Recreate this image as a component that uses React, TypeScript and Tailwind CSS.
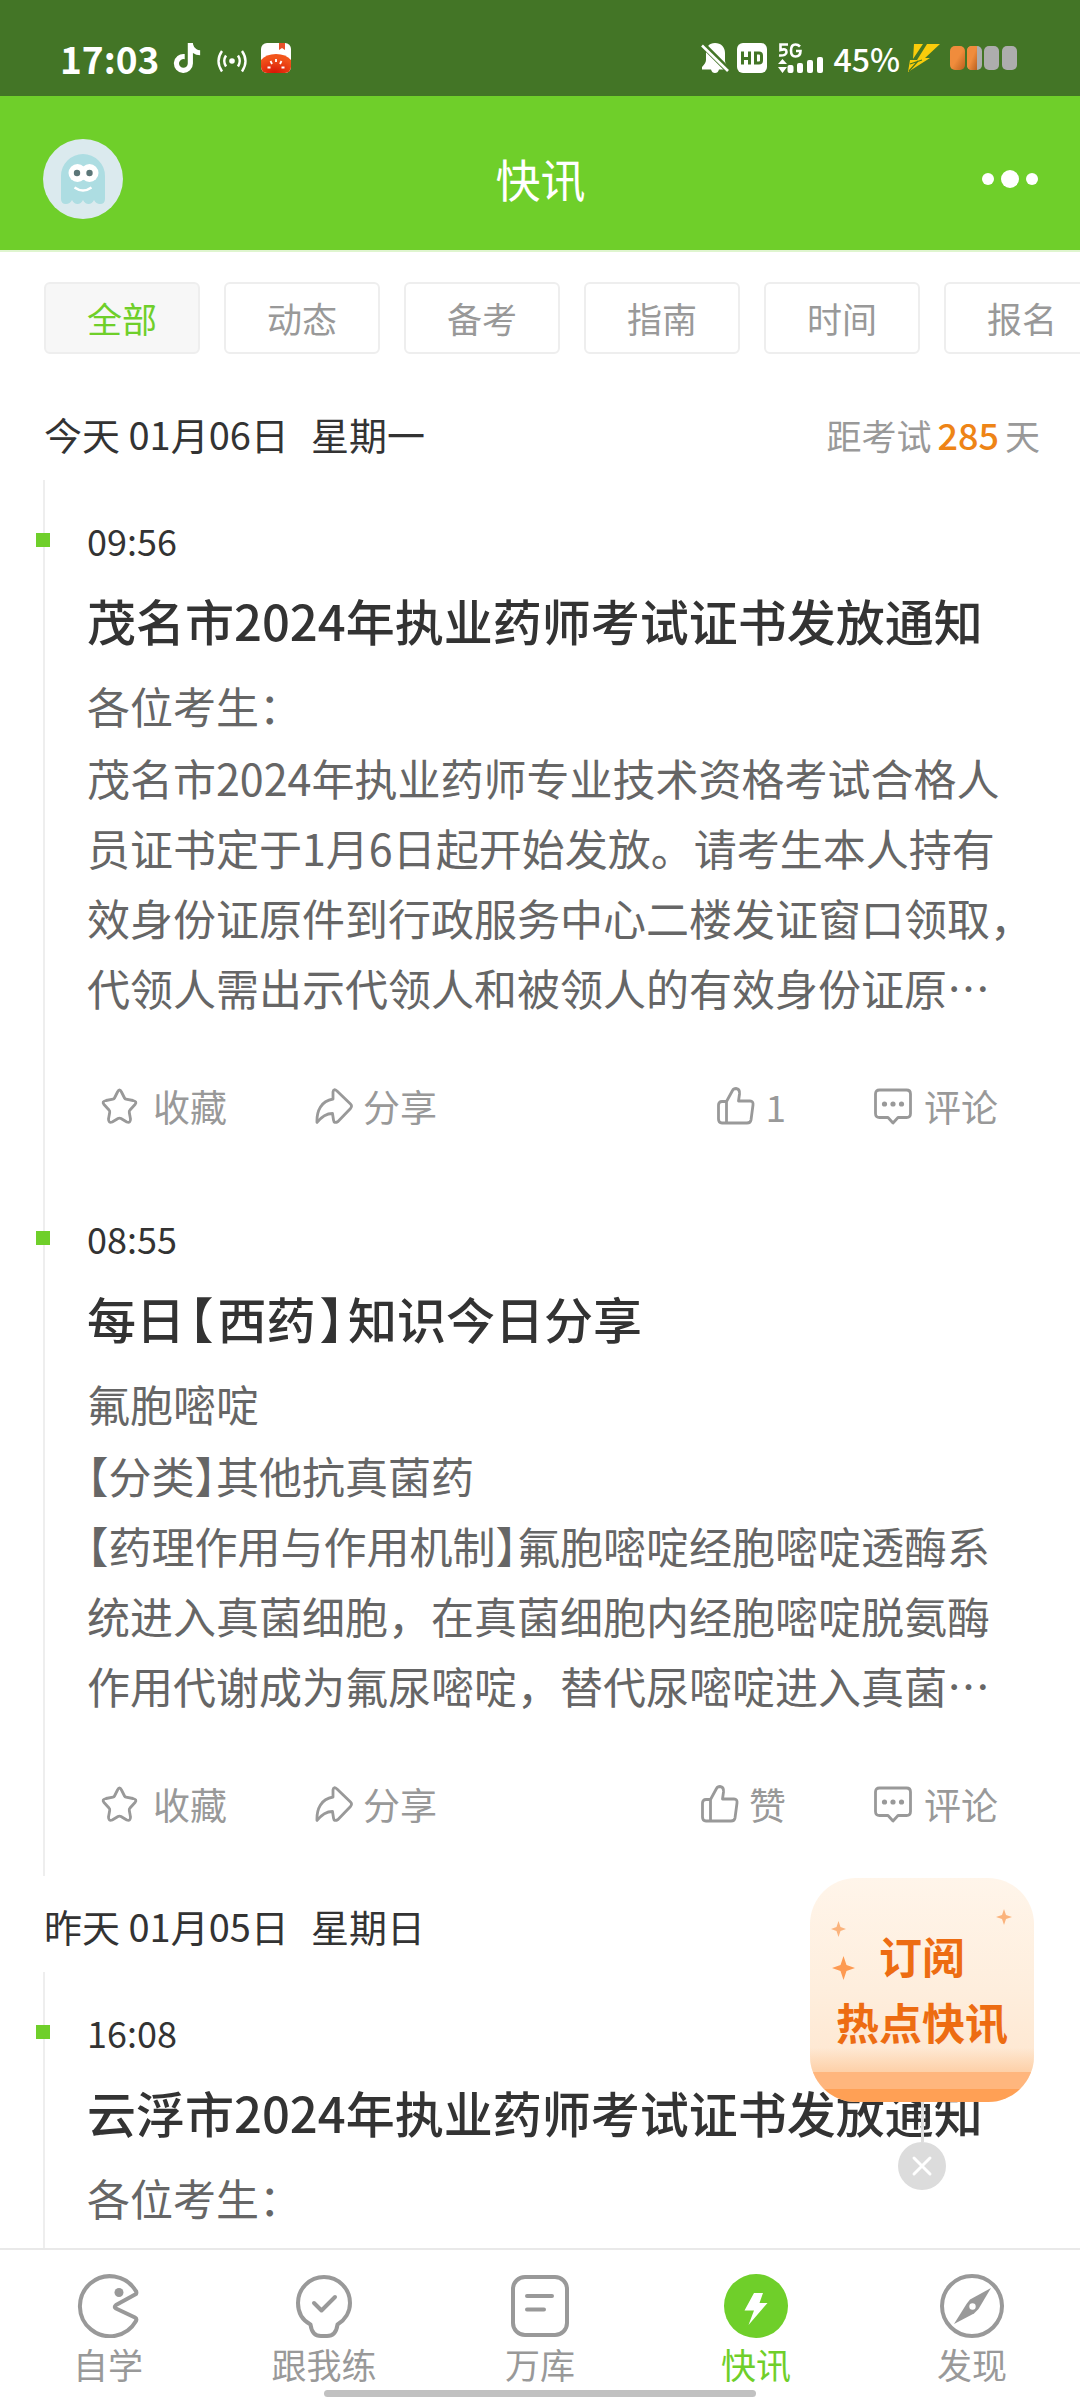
import { useState } from 'react';
import type { ReactNode } from 'react';
import { FaTiktok } from 'react-icons/fa6';

interface Article {
  time: string;
  title: string;
  lead: string;
  lines?: string[];
  likes: number;
}

interface Day {
  date: string;
  weekday: string;
  articles: Article[];
}

const CATEGORIES = ['全部', '动态', '备考', '指南', '时间', '报名'];

const DAYS: Day[] = [
  {
    date: '今天 01月06日',
    weekday: '星期一',
    articles: [
      {
        time: '09:56',
        title: '茂名市2024年执业药师考试证书发放通知',
        lead: '各位考生：',
        lines: [
          '茂名市2024年执业药师专业技术资格考试合格人',
          '员证书定于1月6日起开始发放。请考生本人持有',
          '效身份证原件到行政服务中心二楼发证窗口领取，',
          '代领人需出示代领人和被领人的有效身份证原⋯',
        ],
        likes: 1,
      },
      {
        time: '08:55',
        title: '每日【西药】知识今日分享',
        lead: '氟胞嘧啶',
        lines: [
          '【分类】其他抗真菌药',
          '【药理作用与作用机制】氟胞嘧啶经胞嘧啶透酶系',
          '统进入真菌细胞，在真菌细胞内经胞嘧啶脱氨酶',
          '作用代谢成为氟尿嘧啶，替代尿嘧啶进入真菌⋯',
        ],
        likes: 0,
      },
    ],
  },
  {
    date: '昨天 01月05日',
    weekday: '星期日',
    articles: [
      {
        time: '16:08',
        title: '云浮市2024年执业药师考试证书发放通知',
        lead: '各位考生：',
        likes: 0,
      },
    ],
  },
];

// 【】 are set half-width so they don't leave a hole in the line
function Brackets({ text, className = '' }: { text: string; className?: string }) {
  return (
    <>
      {text.split(/([【】])/).map((part, i) =>
        part === '【' || part === '】'
          ? <span key={i} className={`[font-feature-settings:'halt'] ${className}`}>{part}</span>
          : part
      )}
    </>
  );
}

function StatusBar() {
  return (
    <div className="flex h-24 shrink-0 items-center justify-between bg-[#437526] pt-5 pr-[63px] pl-[60px] text-white">
      <div className="flex items-center">
        <span className="text-[37px] leading-[40px] font-bold">17:03</span>
        <FaTiktok className="ml-3.5 h-[30px] w-[28px]" />
        <svg className="ml-4 h-[30px] w-[30px]" viewBox="0 0 30 30" fill="none" stroke="currentColor" strokeWidth="2.4">
          <circle cx="15" cy="18" r="2.8" fill="currentColor" stroke="none" />
          <path d="M9 12.5Q5.5 18 9 23.5M21 12.5Q24.5 18 21 23.5M5 8Q-2 18 5 28.5M25 8Q32 18 25 28.5" />
        </svg>
        <svg className="ml-3.5 h-[30px] w-[30px]" viewBox="0 0 30 30">
          <defs>
            <clipPath id="tomato"><rect width="30" height="30" rx="6" /></clipPath>
            <radialGradient id="tomatoFill" cx=".45" cy="1" r=".8">
              <stop offset="0" stopColor="#d81505" />
              <stop offset="1" stopColor="#f2541b" />
            </radialGradient>
          </defs>
          <g clipPath="url(#tomato)">
            <rect width="30" height="30" fill="#fff" />
            <path d="M18 0h6v7l-3-2-3 2z" fill="#e8502a" />
            <path d="M0 17Q5 11 15 11T30 17V30H0z" fill="url(#tomatoFill)" />
          </g>
          <path d="M15 16v3M9.5 18l1.5 3M20.5 18l-1.5 3M6.5 24.5h3M20.5 24.5h3" stroke="#fff" strokeWidth="1.8" />
        </svg>
      </div>

      <div className="flex items-center">
        <svg className="h-[30px] w-[28px]" viewBox="0 0 28 30" fill="currentColor">
          <path d="M14 0C20 0 24 4 24 10V18Q24 20 26 23V26.5H18Q17 30 14 30T10 26.5H1V24Q5 20 5 17V10C5 4 8 0 14 0Z" />
          <path d="M0 0L28 28" stroke="#437526" strokeWidth="6" />
          <path d="M1 2.5L27 28" stroke="currentColor" strokeWidth="2.6" />
        </svg>
        <svg className="ml-2 h-[30px] w-[30px]" viewBox="0 0 30 30">
          <rect width="30" height="30" rx="6" fill="#fff" />
          <path d="M5.5 8.5V21.5M12.5 8.5V21.5M5.5 15.5H12.5M18.5 10H22Q24.5 10 24.5 12.5V17.5Q24.5 20 22 20H18.5Z" fill="none" stroke="#437526" strokeWidth="3" />
        </svg>
        <svg className="ml-[11px] h-[30px] w-[45px]" viewBox="0 0 45 30" fill="currentColor">
          <path d="M10 1.5H2.5V7Q8.5 5 8.5 9T1 12.5M22 3.5Q20 1.5 17.5 1.5Q13 1.5 13 7.5T17.5 13.5Q22.5 13.5 22.5 8H18" fill="none" stroke="currentColor" strokeWidth="2.6" />
          <path d="M4.5 16L9 21H0ZM4.5 30L0 24H9Z" />
          <rect x="9.5" y="22" width="6" height="8" rx="2" />
          <rect x="19" y="20" width="6" height="10" rx="2" />
          <rect x="29" y="17" width="6" height="13" rx="2" />
          <rect x="39" y="14" width="6" height="16" rx="2" />
        </svg>
        <span className="ml-2.5 text-[32px] leading-[40px] font-medium">45%</span>
        <svg className="ml-2 h-[28px] w-[32px]" viewBox="0 0 32 28" fill="#f9cc0b">
          <path d="M6 0H15L5 15ZM19 0H32L17 14H22L0 28L2 16H9Z" />
          <path d="M2 20L14 16M1 27L10 17" stroke="#437526" strokeWidth="1.2" />
        </svg>
        <svg className="ml-2.5 h-[24px] w-[67px]" viewBox="0 0 67 24">
          <defs>
            <linearGradient id="cell" x1="0" y1="0" x2="1" y2="1">
              <stop offset=".5" stopColor="#f08c3c" />
              <stop offset="1" stopColor="#b9601f" />
            </linearGradient>
          </defs>
          <rect width="15" height="24" rx="5" fill="url(#cell)" />
          <rect x="17" width="15" height="24" rx="5" fill="#adadad" />
          <path d="M22 0H27V24H22Q17 24 17 19V5Q17 0 22 0Z" fill="url(#cell)" />
          <rect x="34" width="15" height="24" rx="5" fill="#adadad" />
          <rect x="52" width="15" height="24" rx="5" fill="#adadad" />
        </svg>
      </div>
    </div>
  );
}

function Header() {
  return (
    <header className="grid h-[156px] shrink-0 grid-cols-3 items-center border-b-2 border-[#dff5cf] bg-[#6fcf2a] pt-3 pr-[42px] pl-[43px] text-white">
      <button aria-label="我的" className="h-20 w-20">
        <svg viewBox="0 0 80 80">
          <circle cx="40" cy="40" r="40" fill="#dbeaee" />
          <path d="M18 37a22 22 0 0 1 44 0V60q0 5-5 5q-4 0-6-4q-2 4-5.5 4t-5.5-4q-2 4-5.5 4t-5.5-4q-2 4-6 4q-5 0-5-5z" fill="#addde2" />
          <circle cx="34.5" cy="34" r="9" fill="#fff" />
          <circle cx="46.5" cy="34" r="9" fill="#fff" />
          <circle cx="34" cy="34" r="3.2" fill="#5c7678" />
          <circle cx="46.5" cy="34" r="3.2" fill="#5c7678" />
          <path d="M31.5 48.5Q40 54.5 48.5 48.5" fill="none" stroke="#fff" strokeWidth="2.4" />
        </svg>
      </button>
      <h1 className="text-center text-[45px] leading-[60px]">快讯</h1>
      <button aria-label="更多" className="justify-self-end">
        <svg className="h-5 w-14" viewBox="0 0 56 20" fill="currentColor">
          <circle cx="6" cy="10" r="6" />
          <circle cx="28" cy="10" r="9" />
          <circle cx="50" cy="10" r="6" />
        </svg>
      </button>
    </header>
  );
}

function ActionIcon({ children }: { children: ReactNode }) {
  return (
    <svg className="h-[38px] w-[38px]" viewBox="0 0 38 38" fill="none" stroke="currentColor" strokeWidth="2.8" strokeLinejoin="round">
      {children}
    </svg>
  );
}

function ActionBar({ likes }: { likes: number }) {
  return (
    <div className="mt-[60px] flex items-center justify-between pr-[38px] pl-3.5 text-[37px] leading-[48px] text-[#999]">
      <div className="flex gap-[88px]">
        <button className="flex items-center gap-3.5">
          <ActionIcon>
            <path d="M16.5 5Q18.5 1 20.5 5L23.5 11Q24 12 25 12.2L32 13.5Q36.5 14.5 34 17.5L29 23Q28 24 28.3 25.5L29.5 32Q29.5 36.500 25.8 35L20 31.5Q18.5 30.7 17 31.5L11.2 35Q7.5 36.5 7.5 32L8.7 25.5Q9 24 8 23L3 17.5Q.5 14.5 5 13.5L12 12.2Q13 12 13.5 11Z" />
          </ActionIcon>
          收藏
        </button>
        <button className="flex items-center gap-2.5">
          <ActionIcon>
            <path d="M2 35.5C1.5 24 6 14 18 12V5Q18.5 1 22 4L35.5 17Q37.5 19 35.5 21.5L23 34.5Q19 37 18.5 33L17.5 26.5Q9 26.5 2 35.5Z" />
          </ActionIcon>
          分享
        </button>
      </div>
      <div className="flex gap-[88px]">
        <button className="flex items-center gap-2.5">
          <ActionIcon>
            <path d="M9.5 14.5H5Q1.5 14.5 1.5 18V32Q1.5 36 5 36H30Q33.500 36 34 33L36 18Q36.5 14 33 14H21.5L22.5 7Q23 2 19 1.5Q16.5 1.5 15.5 3.5L9.5 14.5ZM9.5 14.5V36" />
          </ActionIcon>
          {likes || '赞'}
        </button>
        <button className="flex items-center gap-3">
          <ActionIcon>
            <path d="M5.5 3H32.5Q36.5 3 36.5 7V26.5Q36.5 30.5 32.5 30.5H24L19 36L14 30.5H5.5Q1.5 30.5 1.5 26.5V7Q1.500 3 5.5 3Z" />
            <g fill="currentColor" stroke="none">
              <circle cx="10.5" cy="17" r="2.6" />
              <circle cx="19" cy="17" r="2.6" />
              <circle cx="27.5" cy="17" r="2.6" />
            </g>
          </ActionIcon>
          评论
        </button>
      </div>
    </div>
  );
}

function ArticleItem({ article }: { article: Article }) {
  return (
    <article className="pr-11 pb-12 pl-[42px]">
      <div className="relative pt-9">
        <span className="absolute top-[53px] -left-[51px] h-3.5 w-3.5 bg-[#6fcf2a]" />
        <time className="block text-[36px] leading-[48px] text-[#333]">{article.time}</time>
      </div>
      <h2 className="mt-[26px] text-[49px] leading-[60px] font-medium whitespace-nowrap text-[#333]">
        <Brackets text={article.title} className="mx-1" />
      </h2>
      <div className="mt-5 text-[43px] leading-[70px] whitespace-nowrap text-[#666]">
        <p className="mb-0.5">{article.lead}</p>
        {article.lines?.map(line => <p key={line}><Brackets text={line} /></p>)}
      </div>
      {article.lines && <ActionBar likes={article.likes} />}
    </article>
  );
}

function DaySection({ day, daysLeft }: { day: Day; daysLeft?: number }) {
  return (
    <section className="shrink-0">
      <div className="flex h-24 items-center justify-between pt-1 pr-10 pl-11">
        <h3 className="flex gap-[22px] text-[38px] leading-[48px] text-[#333]">
          <span>{day.date}</span>
          <span>{day.weekday}</span>
        </h3>
        {daysLeft !== undefined && (
          <p className="flex items-baseline gap-1.5 text-[35px] leading-[48px] text-[#999]">
            距考试
            <span className="text-[36px] font-medium text-[#ee8416]">{daysLeft}</span>
            天
          </p>
        )}
      </div>
      <div className="ml-[43px] border-l-2 border-[#eee]">
        {day.articles.map(a => <ArticleItem key={a.time} article={a} />)}
      </div>
    </section>
  );
}

function SubscribeCard({ onClose }: { onClose: () => void }) {
  return (
    <div className="absolute right-[46px] bottom-[58px] flex flex-col items-center">
      <button className="relative h-56 w-56 overflow-hidden rounded-[46px] bg-linear-to-b from-[#fff5ea] via-[#feeedd] to-[#fee4cb] pb-1 text-[43px] leading-[66px] font-bold text-[#ed6c12]">
        <svg className="absolute inset-0" viewBox="0 0 224 224">
          <defs>
            <linearGradient id="shade" x1="0" y1="0" x2="0" y2="1">
              <stop offset="0" stopColor="#fdd0a8" stopOpacity="0" />
              <stop offset="1" stopColor="#fdd0a8" />
            </linearGradient>
          </defs>
          <rect y="170" width="224" height="24" fill="url(#shade)" />
          <rect y="194" width="224" height="17" fill="#ffb67d" />
          <rect y="211" width="224" height="13" fill="#ffa055" />
          <path d="M28.5 43L30.5 49L36 51L30.5 53L28.5 59L26.5 53L21 51L26.5 49ZM194 31L196 37L202 39L196 41L194 47L192 41L186 39L192 37Z" fill="#fbb37c" />
          <path d="M33.5 78L36.5 87L45 90L36.5 93L33.5 102L30.5 93L22 90L30.5 87Z" fill="#fd9a52" />
        </svg>
        <span className="relative block">订阅</span>
        <span className="relative block">热点快讯</span>
      </button>
      <span className="h-10 w-[3px] bg-[#ddd]" />
      <button aria-label="关闭" onClick={onClose} className="rounded-full bg-[#dcdcdc] text-white">
        <svg className="h-12 w-12" viewBox="0 0 48 48" stroke="currentColor" strokeWidth="3" strokeLinecap="round">
          <path d="M16 16L32 32M32 16L16 32" />
        </svg>
      </button>
    </div>
  );
}

function TabIcon({ children }: { children: ReactNode }) {
  return (
    <svg className="h-16 w-16" viewBox="0 0 64 64" fill="none" stroke="currentColor" strokeWidth="4" strokeLinecap="round" strokeLinejoin="round">
      {children}
    </svg>
  );
}

const TABS = [
  {
    label: '自学',
    icon: (
      <>
        <path d="M60 20Q61 18 59.5 16.5A30 30 0 1 0 60 47Q61 44.5 59 43.5L40 34.5Q37.5 33 40 31Z" />
        <circle cx="43" cy="18.5" r="4.5" fill="currentColor" stroke="none" />
      </>
    ),
  },
  {
    label: '跟我练',
    icon: (
      <>
        <path d="M18.5 50.5C10 46 6 38 6 29A26 26 0 0 1 58 29C58 38 53 46 45.5 50.5Q44 62 35 62H29Q20 62 18.5 50.5Z" />
        <path d="M22 29L29.5 36.5L43 23" />
      </>
    ),
  },
  {
    label: '万库',
    icon: (
      <>
        <rect x="5" y="3" width="54" height="58" rx="12" />
        <path d="M19 22H44M19 35.5H36" />
      </>
    ),
  },
  {
    label: '快讯',
    icon: (
      <>
        <circle cx="32" cy="32" r="32" fill="currentColor" stroke="none" />
        <path d="M30 19H39L35.5 29H43.5L24.5 51L30 36.5H20.5Z" fill="#fff" stroke="none" />
      </>
    ),
  },
  {
    label: '发现',
    icon: (
      <>
        <circle cx="32" cy="32" r="30" />
        <path d="M51 14L38.5 35L34 39.5L14 50L26.5 30L30 25.5Z" fill="currentColor" stroke="none" />
        <circle cx="32.5" cy="32.5" r="3.2" fill="#fff" stroke="none" />
      </>
    ),
  },
];

export default function App() {
  const [category, setCategory] = useState('全部');
  const [tab, setTab] = useState('快讯');
  const [showCard, setShowCard] = useState(true);

  return (
    <div className="flex h-screen flex-col overflow-hidden bg-white font-['Noto_Sans_CJK_SC',sans-serif]">
      <StatusBar />
      <Header />

      <main className="relative min-h-0 flex-1 overflow-hidden">
        <div className="flex gap-6 overflow-hidden px-11 py-[30px]">
          {CATEGORIES.map(c => (
            <button
              key={c}
              onClick={() => setCategory(c)}
              className={`h-[72px] w-[156px] shrink-0 rounded-md border-2 border-[#eee] text-[35px] leading-[48px] ${
                c === category ? 'bg-[#f7f7f7] text-[#6fcf2a]' : 'bg-white text-[#999]'
              }`}
            >
              {c}
            </button>
          ))}
        </div>
        {DAYS.map((day, i) => (
          <DaySection key={day.date} day={day} daysLeft={i === 0 ? 285 : undefined} />
        ))}
        {showCard && <SubscribeCard onClose={() => setShowCard(false)} />}
      </main>

      <nav className="relative grid h-[152px] shrink-0 grid-cols-5 border-t-2 border-[#e9e9e9] bg-white">
        {TABS.map(t => (
          <button
            key={t.label}
            onClick={() => setTab(t.label)}
            className={`flex flex-col items-center pt-6 text-[35px] leading-[36px] ${
              t.label === tab ? 'text-[#6fcf2a]' : 'text-[#999]'
            }`}
          >
            <TabIcon>{t.icon}</TabIcon>
            <span className="mt-2">{t.label}</span>
          </button>
        ))}
        <span className="absolute bottom-[3px] left-1/2 h-[7px] w-2/5 -translate-x-1/2 rounded-full bg-[#c1c1c1]" />
      </nav>
    </div>
  );
}
